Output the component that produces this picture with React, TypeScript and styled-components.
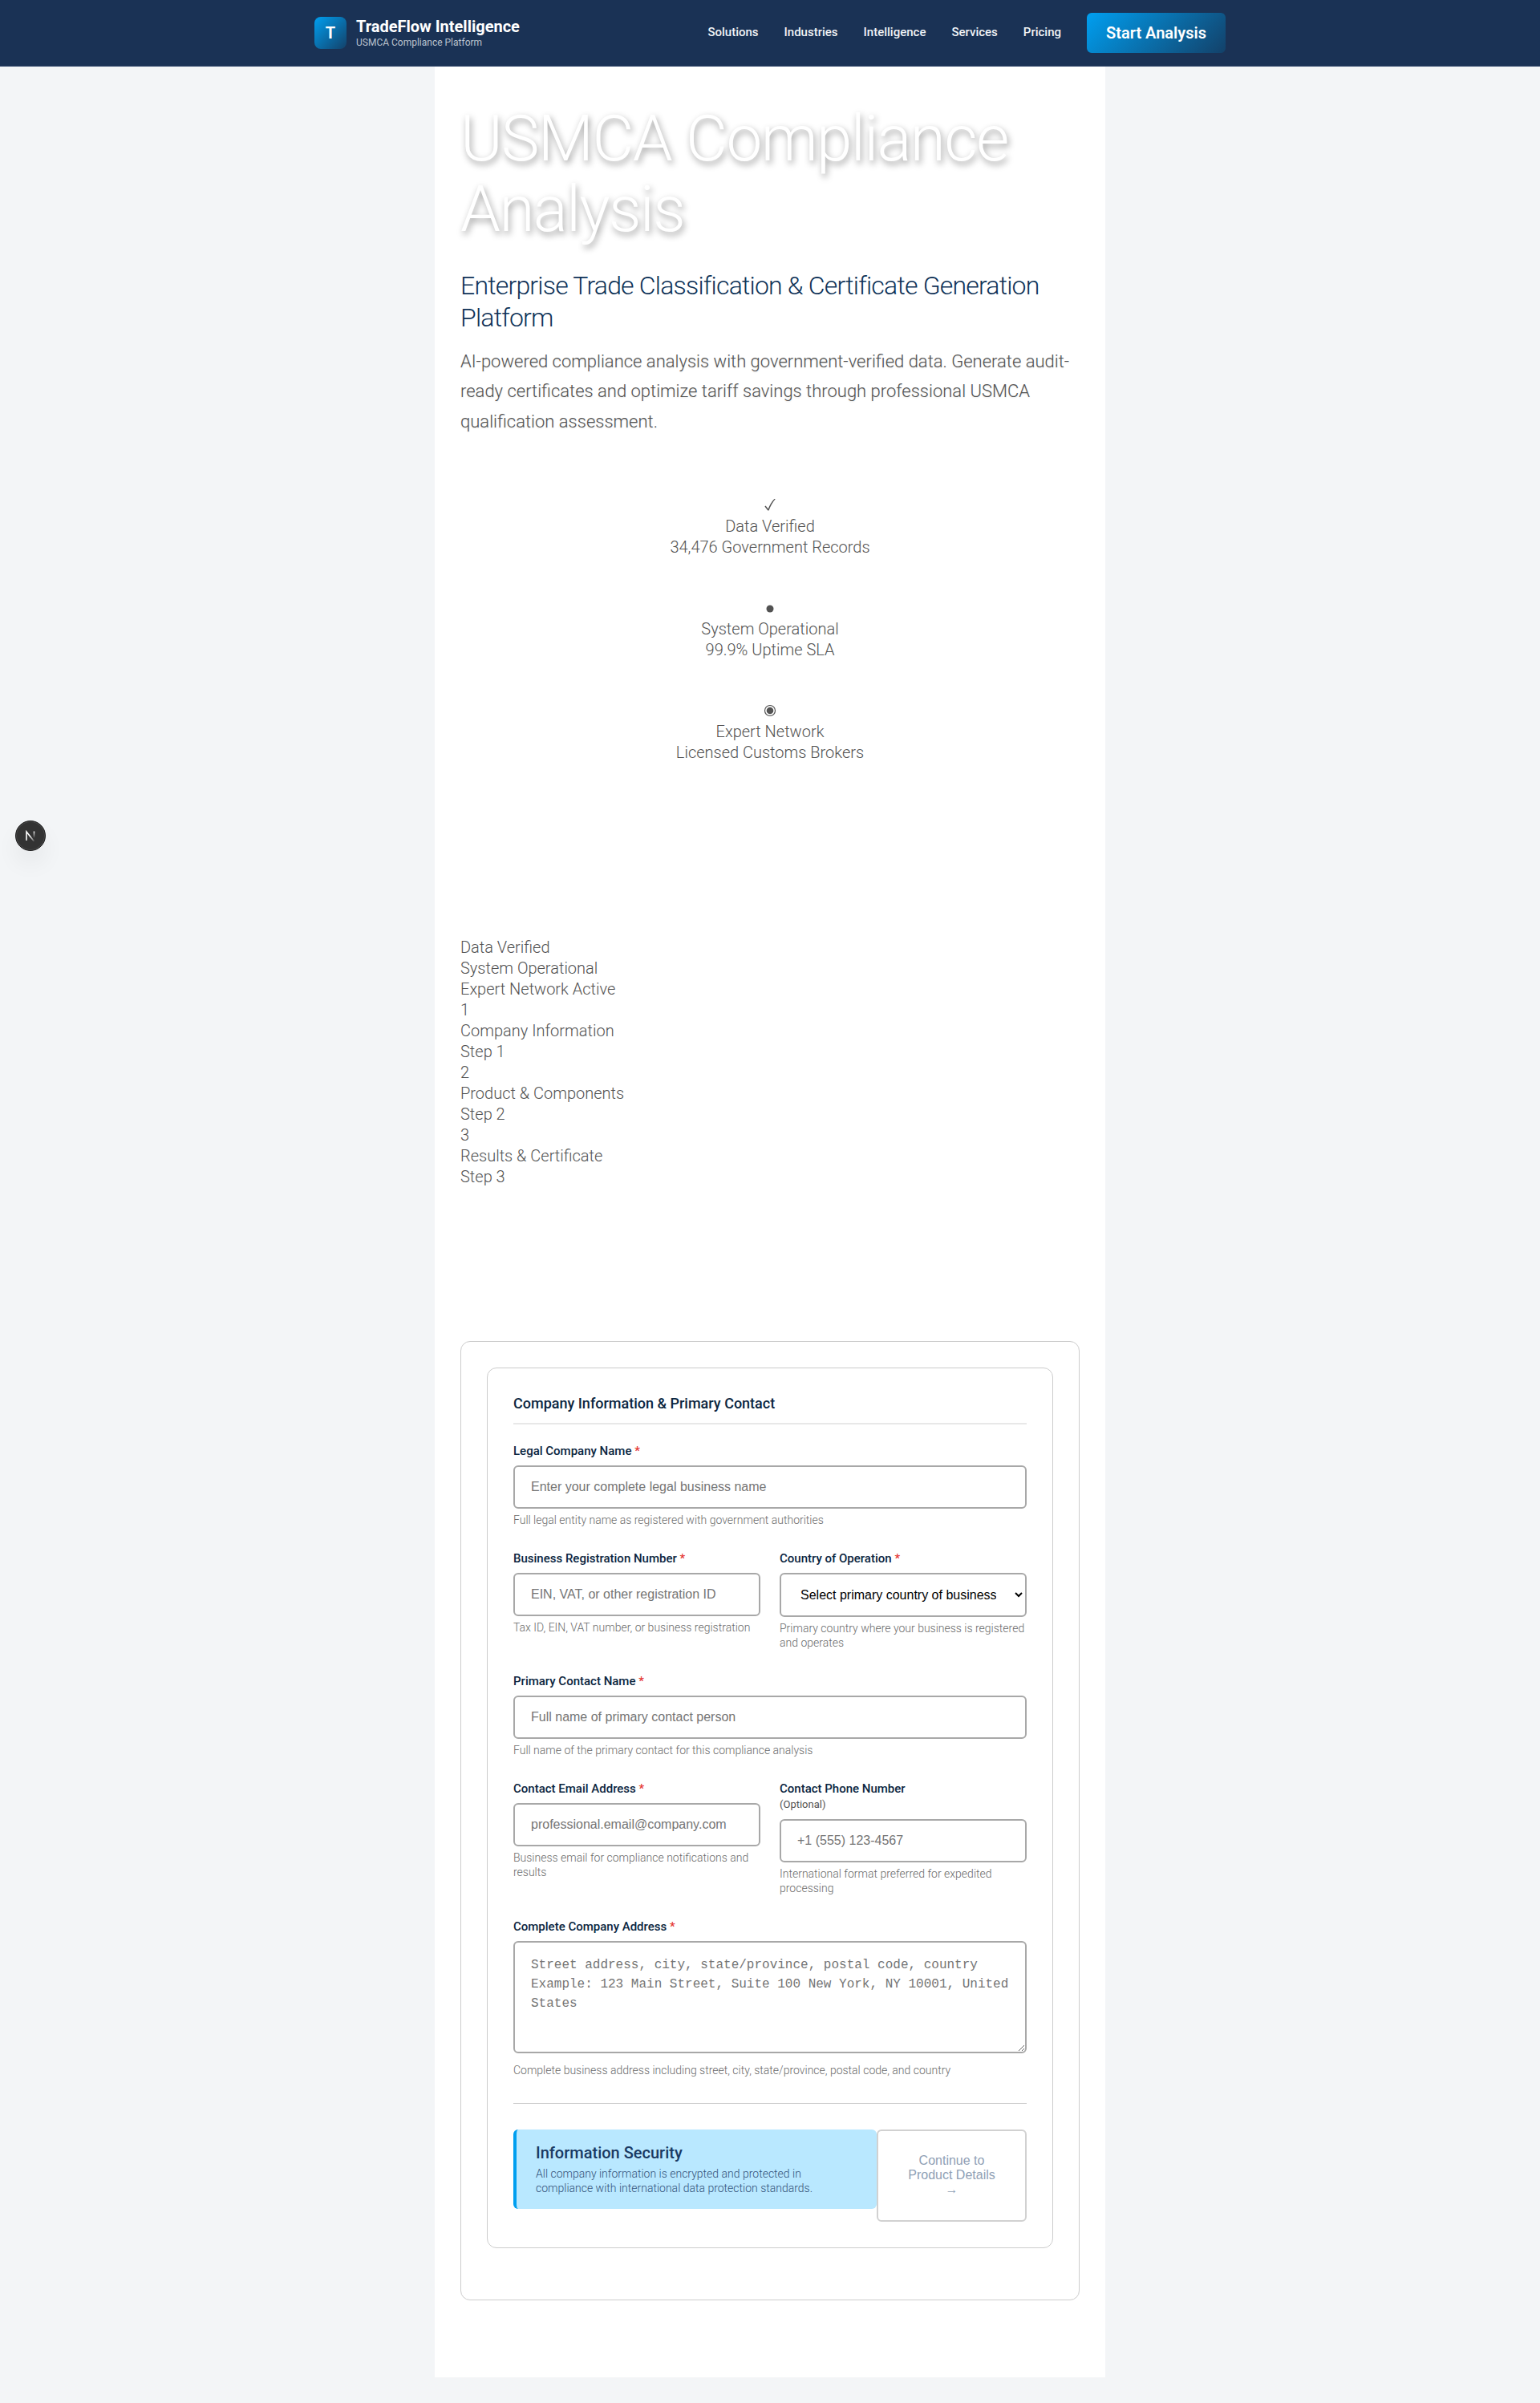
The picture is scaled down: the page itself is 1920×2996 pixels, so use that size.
import React from "react";
import styled, { createGlobalStyle } from "styled-components";

const GlobalStyle = createGlobalStyle`
  *, *::before, *::after { box-sizing: border-box; }
  body {
    margin: 0;
    background: #f3f5f7;
    color: #525252;
    font-family: Roboto, "Liberation Sans", sans-serif;
    font-size: 20px;
    font-weight: 300;
    line-height: 26px;
  }
  h1, h2, p { margin: 0; }
`;

const Header = styled.header`
  background: #1a3255;
  border-bottom: 1px solid #30466a;
`;

const HeaderInner = styled.div`
  max-width: 1200px;
  margin: 0 auto;
  padding: 16px 32px;
  display: flex;
  align-items: center;
  justify-content: space-between;
`;

const Brand = styled.a`
  display: flex;
  align-items: center;
  gap: 12px;
  color: #ffffff;
  text-decoration: none;
`;

const BrandMark = styled.span`
  width: 40px;
  height: 40px;
  border-radius: 8px;
  display: flex;
  align-items: center;
  justify-content: center;
  background: linear-gradient(135deg, #009ff0 0%, #134169 100%);
  font-size: 20px;
  font-weight: 700;
`;

const BrandText = styled.span`
  display: flex;
  flex-direction: column;
`;

const BrandName = styled.span`
  font-size: 20px;
  font-weight: 700;
  line-height: 24px;
`;

const BrandTagline = styled.span`
  font-size: 12px;
  font-weight: 400;
  line-height: 16px;
  color: #bac2ce;
`;

const Nav = styled.nav`
  display: flex;
  align-items: center;
  gap: 32px;
`;

const NavLink = styled.a`
  border-bottom: 2px solid transparent;
  font-size: 15px;
  font-weight: 500;
  line-height: 24px;
  color: #f0f2f5;
  text-decoration: none;
`;

const StartButton = styled.button`
  border: 0;
  border-radius: 6px;
  padding: 12px 24px;
  background: linear-gradient(135deg, #009ff0 0%, #134169 100%);
  color: #ffffff;
  font-family: inherit;
  font-size: 20px;
  font-weight: 600;
  line-height: 26px;
`;

const Main = styled.main`
  max-width: 836px;
  margin: 0 auto 32px;
  padding: 46px 32px 96px;
  background: #ffffff;
`;

const Title = styled.h1`
  font-size: 80px;
  font-weight: 300;
  line-height: 88px;
  letter-spacing: -0.02em;
  color: #ffffff;
  text-shadow: 2px 4px 8px rgba(0, 0, 0, 0.4);
`;

const Subtitle = styled.h2`
  margin-top: 31px;
  font-size: 32px;
  font-weight: 300;
  line-height: 40px;
  letter-spacing: -0.025em;
  color: #0f3358;
`;

const Lead = styled.p`
  margin-top: 16px;
  font-size: 22px;
  line-height: 1.7;
  text-shadow: 0 1px 2px rgba(0, 0, 0, 0.1);
`;

const StatusList = styled.div`
  margin-top: 72px;
  display: flex;
  flex-direction: column;
  gap: 49px;
  text-align: center;
`;

const StatusIcon = styled.div`
  height: 27px;
  display: flex;
  align-items: center;
  justify-content: center;
`;

const StepList = styled.div`
  margin: 217px 0 192px;
`;

const OuterCard = styled.section`
  border: 1px solid #cccccc;
  border-radius: 12px;
  padding: 32px 32px 64px;
`;

const Form = styled.form`
  border: 1px solid #cccccc;
  border-radius: 12px;
  padding: 32px;
`;

const FormTitle = styled.h2`
  padding-bottom: 12px;
  margin-bottom: 24px;
  border-bottom: 2px solid #e8e8e8;
  font-size: 18px;
  font-weight: 500;
  line-height: 24px;
  color: #0a2540;
`;

const Fields = styled.div`
  display: grid;
  grid-template-columns: 1fr 1fr;
  gap: 30px 24px;
`;

const FieldBox = styled.div<{ $wide?: boolean }>`
  grid-column: ${(p) => (p.$wide ? "1 / -1" : "auto")};
  display: flex;
  flex-direction: column;
`;

const Label = styled.label`
  margin-bottom: 8px;
  font-size: 15px;
  font-weight: 500;
  line-height: 19px;
  color: #0a2540;
`;

const Required = styled.span`
  color: #e53935;
`;

const Optional = styled.span`
  display: block;
  font-size: 13px;
  font-weight: 400;
  line-height: 20px;
  color: #525252;
`;

const Input = styled.input`
  width: 100%;
  padding: 16px 20px;
  border: 2px solid #a8a8a8;
  border-radius: 6px;
  background: #ffffff;
  font-family: "Liberation Sans", Arial, sans-serif;
  font-size: 16px;
  &::placeholder { color: #757575; }
`;

const Select = styled.select`
  width: 100%;
  padding: 16px 20px;
  border: 2px solid #a8a8a8;
  border-radius: 6px;
  background: #ffffff;
  color: #000000;
  font-family: "Liberation Sans", Arial, sans-serif;
  font-size: 16px;
`;

const TextArea = styled.textarea`
  display: block;
  width: 100%;
  height: 140px;
  margin-bottom: 7px;
  padding: 16px 20px;
  border: 2px solid #a8a8a8;
  border-radius: 6px;
  background: #ffffff;
  font-family: "Liberation Mono", monospace;
  font-size: 16px;
  line-height: 24px;
  resize: vertical;
  &::placeholder { color: #757575; }
`;

const Hint = styled.p`
  margin-top: 5px;
  font-size: 14px;
  line-height: 18px;
  color: #6b6b6b;
`;

const FormFooter = styled.div`
  margin-top: 32px;
  padding-top: 32px;
  border-top: 1px solid #cccccc;
  display: flex;
  align-items: flex-start;
`;

const Notice = styled.div`
  flex: 1;
  padding: 16px 24px 17px;
  border-left: 4px solid #009ff0;
  border-radius: 6px;
  background: #b9e8ff;
  color: #1a3a63;
`;

const NoticeTitle = styled.div`
  margin-bottom: 4px;
  font-weight: 500;
`;

const NoticeText = styled.p`
  font-size: 14px;
  line-height: 18px;
  color: #33527a;
`;

const ContinueButton = styled.button`
  width: 187px;
  padding: 28px 32px 29px;
  border: 2px solid #d1d1d1;
  border-radius: 6px;
  background: #ffffff;
  color: #8f9fb5;
  font-family: "Liberation Sans", Arial, sans-serif;
  font-size: 16px;
  line-height: 18px;
`;

const DevBadge = styled.button`
  position: fixed;
  top: 1023px;
  left: 19px;
  width: 38px;
  height: 38px;
  padding: 0;
  border: 1px solid #1c1c1c;
  border-radius: 50%;
  display: flex;
  align-items: center;
  justify-content: center;
  background: #333333;
  box-shadow: inset 0 0 0 1px #484848, 0 16px 32px -8px rgba(0, 0, 0, 0.16);
`;

const CheckIcon = () => (
  <svg width="16" height="16" viewBox="0 0 16 16" fill="#525252" role="img" aria-label="Verified">
    <path d="M1.400 9.600 2.600 8.500 5.700 12.400C7.600 7.800 10 3.600 13.400 0H14.800C11.300 4.200 8.600 9 6.500 14.600H5.300Z" />
  </svg>
);

const DotIcon = () => (
  <svg width="16" height="16" viewBox="0 0 16 16" fill="#525252" role="img" aria-label="Operational">
    <circle cx="8" cy="9" r="4.500" />
  </svg>
);

const FisheyeIcon = () => (
  <svg width="16" height="16" viewBox="0 0 16 16" role="img" aria-label="Active">
    <circle cx="8" cy="8" r="6.500" fill="none" stroke="#525252" strokeWidth="1.200" />
    <circle cx="8" cy="8" r="4.300" fill="#525252" />
  </svg>
);

const statuses = [
  { Icon: CheckIcon, name: "Data Verified", detail: "34,476 Government Records" },
  { Icon: DotIcon, name: "System Operational", detail: "99.9% Uptime SLA" },
  { Icon: FisheyeIcon, name: "Expert Network", detail: "Licensed Customs Brokers" },
];

const steps = [
  "Data Verified",
  "System Operational",
  "Expert Network Active",
  "1",
  "Company Information",
  "Step 1",
  "2",
  "Product & Components",
  "Step 2",
  "3",
  "Results & Certificate",
  "Step 3",
];

type FieldProps = {
  id: string;
  label: string;
  hint: string;
  wide?: boolean;
  required?: boolean;
  children: React.ReactNode;
};

function Field({ id, label, hint, wide, required = true, children }: FieldProps) {
  return (
    <FieldBox $wide={wide}>
      <Label htmlFor={id}>
        {label} {required ? <Required>*</Required> : <Optional>(Optional)</Optional>}
      </Label>
      {children}
      <Hint>{hint}</Hint>
    </FieldBox>
  );
}

export default function App() {
  return (
    <>
      <GlobalStyle />
      <Header>
        <HeaderInner>
          <Brand href="#">
            <BrandMark>T</BrandMark>
            <BrandText>
              <BrandName>TradeFlow Intelligence</BrandName>
              <BrandTagline>USMCA Compliance Platform</BrandTagline>
            </BrandText>
          </Brand>
          <Nav>
            {["Solutions", "Industries", "Intelligence", "Services", "Pricing"].map((item) => (
              <NavLink key={item} href="#">{item}</NavLink>
            ))}
            <StartButton type="button">Start Analysis</StartButton>
          </Nav>
        </HeaderInner>
      </Header>

      <Main>
        <Title>USMCA Compliance Analysis</Title>
        <Subtitle>Enterprise Trade Classification &amp; Certificate Generation Platform</Subtitle>
        <Lead>
          AI-powered compliance analysis with government-verified data. Generate audit-ready
          certificates and optimize tariff savings through professional USMCA qualification
          assessment.
        </Lead>

        <StatusList>
          {statuses.map(({ Icon, name, detail }) => (
            <div key={name}>
              <StatusIcon><Icon /></StatusIcon>
              <div>{name}</div>
              <div>{detail}</div>
            </div>
          ))}
        </StatusList>

        <StepList>
          {steps.map((line) => (
            <div key={line}>{line}</div>
          ))}
        </StepList>

        <OuterCard>
          <Form>
            <FormTitle>Company Information &amp; Primary Contact</FormTitle>
            <Fields>
              <Field
                id="company"
                label="Legal Company Name"
                hint="Full legal entity name as registered with government authorities"
                wide
              >
                <Input id="company" type="text" placeholder="Enter your complete legal business name" />
              </Field>
              <Field
                id="registration"
                label="Business Registration Number"
                hint="Tax ID, EIN, VAT number, or business registration"
              >
                <Input id="registration" type="text" placeholder="EIN, VAT, or other registration ID" />
              </Field>
              <Field
                id="country"
                label="Country of Operation"
                hint="Primary country where your business is registered and operates"
              >
                <Select id="country">
                  <option>Select primary country of business</option>
                </Select>
              </Field>
              <Field
                id="contact"
                label="Primary Contact Name"
                hint="Full name of the primary contact for this compliance analysis"
                wide
              >
                <Input id="contact" type="text" placeholder="Full name of primary contact person" />
              </Field>
              <Field
                id="email"
                label="Contact Email Address"
                hint="Business email for compliance notifications and results"
              >
                <Input id="email" type="email" placeholder="professional.email@company.com" />
              </Field>
              <Field
                id="phone"
                label="Contact Phone Number"
                hint="International format preferred for expedited processing"
                required={false}
              >
                <Input id="phone" type="tel" placeholder="+1 (555) 123-4567" />
              </Field>
              <Field
                id="address"
                label="Complete Company Address"
                hint="Complete business address including street, city, state/province, postal code, and country"
                wide
              >
                <TextArea
                  id="address"
                  placeholder={
                    "Street address, city, state/province, postal code, country\nExample: 123 Main Street, Suite 100 New York, NY 10001, United States"
                  }
                />
              </Field>
            </Fields>
            <FormFooter>
              <Notice>
                <NoticeTitle>Information Security</NoticeTitle>
                <NoticeText>
                  All company information is encrypted and protected in compliance with
                  international data protection standards.
                </NoticeText>
              </Notice>
              <ContinueButton type="button">Continue to Product Details →</ContinueButton>
            </FormFooter>
          </Form>
        </OuterCard>
      </Main>

      <DevBadge type="button" aria-label="Open developer tools">
        <svg width="14" height="14" viewBox="0 0 14 14" fill="none" aria-hidden="true">
          <defs>
            <linearGradient id="stem" x1="0" y1="1" x2="0" y2="10" gradientUnits="userSpaceOnUse">
              <stop stopColor="#ffffff" />
              <stop offset="1" stopColor="#ffffff" stopOpacity="0" />
            </linearGradient>
            <linearGradient id="diagonal" x1="7" y1="7" x2="12" y2="14" gradientUnits="userSpaceOnUse">
              <stop stopColor="#ffffff" />
              <stop offset="1" stopColor="#ffffff" stopOpacity="0.1" />
            </linearGradient>
          </defs>
          <path d="M2 13V2l9.500 12" stroke="url(#diagonal)" strokeWidth="1.600" />
          <path d="M11.500 1.500v9" stroke="url(#stem)" strokeWidth="1.600" />
        </svg>
      </DevBadge>
    </>
  );
}
